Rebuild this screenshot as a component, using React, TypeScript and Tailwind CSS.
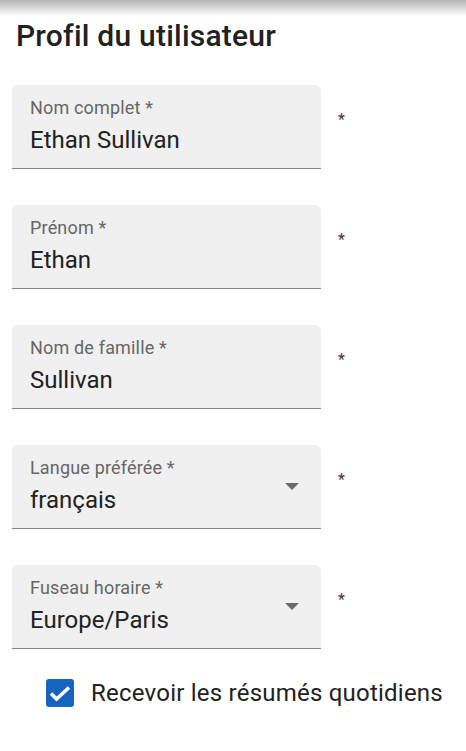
import React from "react";

type Field = { label: string; value: string; select?: boolean };

const fields: Field[] = [
  { label: "Nom complet *", value: "Ethan Sullivan" },
  { label: "Prénom *", value: "Ethan" },
  { label: "Nom de famille *", value: "Sullivan" },
  { label: "Langue préférée *", value: "français", select: true },
  { label: "Fuseau horaire *", value: "Europe/Paris", select: true },
];

const FilledField = ({ label, value, select }: Field) => (
  <div className="flex items-start">
    <div className="flex h-[84px] w-[309px] rounded-t-[6px] border-b border-[#858585] bg-[#f0f0f0]">
      <div className="flex flex-1 flex-col pl-[18px] pt-[14px]">
        <span className="text-[18px] leading-[18px] tracking-[0.00938em] text-[#666666]">{label}</span>
        <span className="mt-[11px] text-[24px] leading-[24px] text-[#212121]">{value}</span>
      </div>
      {select && (
        <span className="mr-[22px] self-center h-0 w-0 border-l-[7px] border-r-[7px] border-t-[7px] border-l-transparent border-r-transparent border-t-[#6b6b6b]" />
      )}
    </div>
    <span className="ml-[17px] mt-[27px] text-[16px] leading-[16px] text-[#5a2a3a]">*</span>
  </div>
);

export default function App() {
  return (
    <div className="min-h-[751px] w-[466px] bg-white font-['Roboto',sans-serif]">
      <div className="h-[16px] bg-gradient-to-b from-[#b3b3b3] to-white" />
      <h1 className="mt-[2px] pl-[16px] text-[30px] font-medium leading-[36px] tracking-[0.0075em] text-[#212121]">
        Profil du utilisateur
      </h1>
      <div className="mt-[31px] flex flex-col gap-[36px] pl-[12px]">
        {fields.map((f) => (
          <FilledField key={f.label} {...f} />
        ))}
      </div>
      <label className="mt-[30px] flex items-center pl-[46px]">
        <span className="flex h-[28px] w-[28px] items-center justify-center rounded-[3px] bg-[#1565c0]">
          <svg viewBox="0 0 28 28" className="h-[28px] w-[28px]">
            <polyline points="5,14.5 10.5,20 23,8.5" fill="none" stroke="white" strokeWidth="3.5" />
          </svg>
        </span>
        <span className="ml-[17px] text-[24px] leading-[28px] tracking-[0.00938em] text-[#212121]">
          Recevoir les résumés quotidiens
        </span>
      </label>
    </div>
  );
}
